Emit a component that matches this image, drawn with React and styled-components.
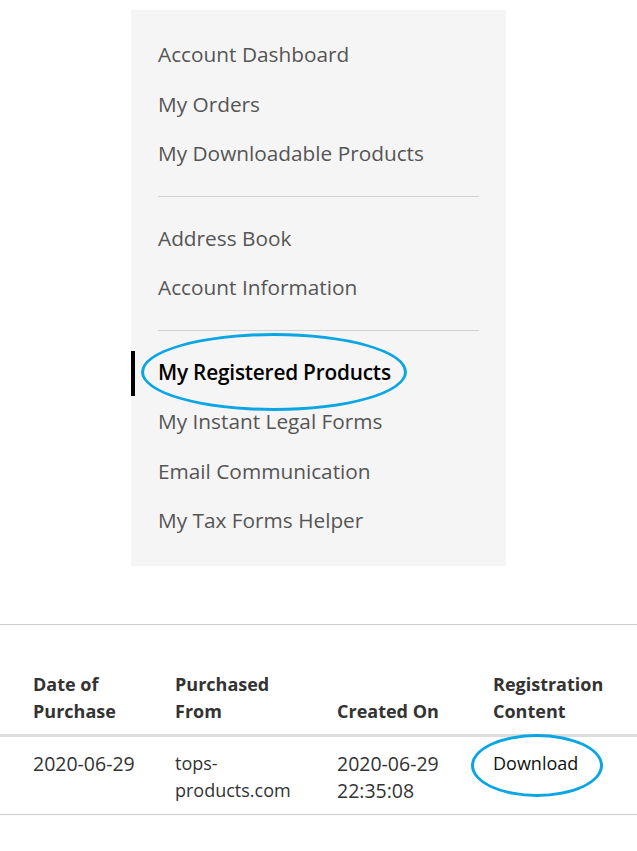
import styled, { createGlobalStyle } from "styled-components";

const GlobalStyle = createGlobalStyle`
  body {
    margin: 0;
    background: #fff;
    font-family: "Open Sans", "Noto Sans", sans-serif;
  }
`;

const Page = styled.div`
  padding-top: 10px;
  width: 637px;
`;

const Sidebar = styled.nav`
  margin-left: 131px;
  width: 375px;
  box-sizing: border-box;
  background: #f5f5f5;
  padding: 20px 27px 20px;
`;

const Item = styled.a`
  position: relative;
  display: block;
  padding: 12px 0;
  line-height: 25.5px;
  font-size: 20.8px;
  color: ${(p) => (p.$active ? "#000" : "#555")};
  font-weight: ${(p) => (p.$active ? 600 : 400)};
  letter-spacing: ${(p) => (p.$active ? "-0.2px" : "0")};
  text-decoration: none;
  white-space: nowrap;

  ${(p) =>
    p.$active &&
    `
    &::before {
      content: "";
      position: absolute;
      left: -27px;
      top: 3px;
      width: 4px;
      height: 45px;
      background: #000;
    }
  `}
`;

const Divider = styled.hr`
  margin: 17px 0;
  border: 0;
  border-top: 1px solid #d1d1d1;
`;

const Ring = styled.span`
  position: absolute;
  left: ${(p) => p.$left}px;
  top: ${(p) => p.$top}px;
  width: ${(p) => p.$width}px;
  height: ${(p) => p.$height}px;
  box-sizing: border-box;
  border: 3px solid #0aa6e3;
  border-radius: 50%;
  pointer-events: none;
`;

const TableWrap = styled.section`
  margin-top: 58px;
  border-top: 1px solid #cccccc;
  padding-top: 35px;
`;

const Table = styled.table`
  width: 100%;
  border-collapse: collapse;
  table-layout: fixed;
  color: #333;
  font-size: 18px;
  line-height: 27px;
`;

const Head = styled.th`
  text-align: left;
  vertical-align: bottom;
  font-weight: 700;
  padding: 11px 20px 9px 0;
  border-bottom: 3px solid #dddddd;

  &:first-child {
    padding-left: 33px;
  }
`;

const Cell = styled.td`
  position: relative;
  vertical-align: top;
  padding: 13px 8px 10px 0;
  border-bottom: 1px solid #cccccc;
  font-size: ${(p) => (p.$digits ? "19.5px" : "18px")};

  &:first-child {
    padding-left: 33px;
  }
`;

const Link = styled.span`
  position: relative;
  color: #111;
`;

const groups = [
  ["Account Dashboard", "My Orders", "My Downloadable Products"],
  ["Address Book", "Account Information"],
  [
    "My Registered Products",
    "My Instant Legal Forms",
    "Email Communication",
    "My Tax Forms Helper",
  ],
];

export default function App() {
  return (
    <Page>
      <GlobalStyle />
      <Sidebar>
        {groups.map((group, gi) => (
          <div key={gi}>
            {gi > 0 && <Divider />}
            {group.map((label) => {
              const active = label === "My Registered Products";
              return (
                <Item key={label} href="#" $active={active}>
                  {label}
                  {active && (
                    <Ring $left={-17} $top={-15} $width={266} $height={78} />
                  )}
                </Item>
              );
            })}
          </div>
        ))}
      </Sidebar>

      <TableWrap>
        <Table>
          <colgroup>
            <col style={{ width: 175 }} />
            <col style={{ width: 162 }} />
            <col style={{ width: 156 }} />
            <col />
          </colgroup>
          <thead>
            <tr>
              <Head>Date of Purchase</Head>
              <Head>Purchased From</Head>
              <Head>Created On</Head>
              <Head>Registration Content</Head>
            </tr>
          </thead>
          <tbody>
            <tr>
              <Cell $digits>2020-06-29</Cell>
              <Cell>tops-products.com</Cell>
              <Cell $digits>2020-06-29 22:35:08</Cell>
              <Cell>
                <Link>
                  Download
                  <Ring $left={-22} $top={-17} $width={132} $height={63} />
                </Link>
              </Cell>
            </tr>
          </tbody>
        </Table>
      </TableWrap>
    </Page>
  );
}
